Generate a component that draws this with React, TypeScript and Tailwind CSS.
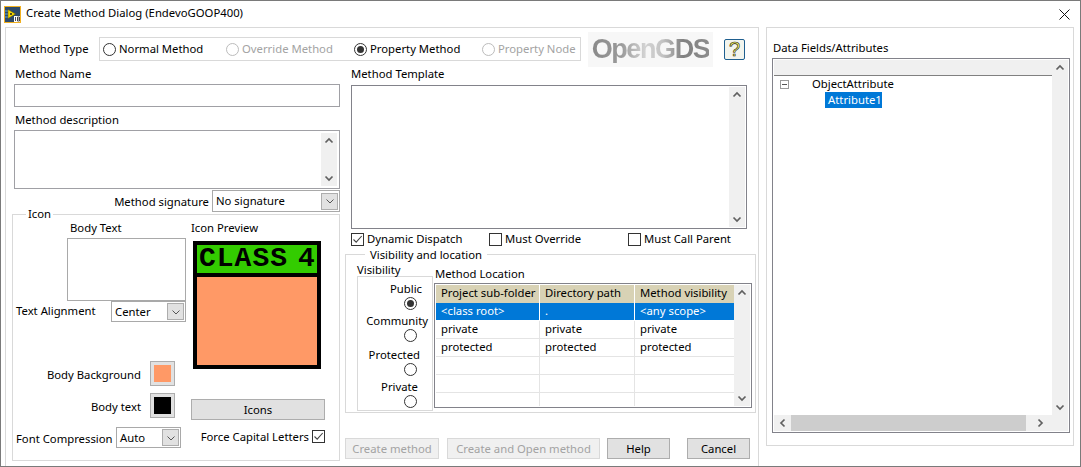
import React from "react";

const Radio = ({ checked = false, disabled = false }: { checked?: boolean; disabled?: boolean }) => (
  <span
    className={`flex h-[13px] w-[13px] shrink-0 items-center justify-center rounded-full border ${
      disabled ? "border-[#bcbcbc]" : "border-[#333]"
    }`}
  >
    {checked && <span className="h-[7px] w-[7px] rounded-full bg-[#333]" />}
  </span>
);

const Check = ({ checked = false }: { checked?: boolean }) => (
  <span className="flex h-[13px] w-[13px] shrink-0 items-center justify-center border border-[#333] bg-white">
    {checked && (
      <svg width="11" height="11" viewBox="0 0 11 11" fill="none" stroke="#444" strokeWidth="1.1">
        <path d="M1.5 5.5 4.2 8.2 9.7 2" />
      </svg>
    )}
  </span>
);

const Chevron = ({ dir }: { dir: "up" | "down" | "left" | "right" }) => {
  const paths = {
    up: "M1.5 6.5 5 3l3.5 3.5",
    down: "M1.5 3.5 5 7l3.5-3.5",
    left: "M6.5 1.5 3 5l3.5 3.5",
    right: "M3.5 1.5 7 5 3.5 8.5",
  };
  return (
    <svg width="10" height="10" viewBox="0 0 10 10" fill="none" stroke="#606060" strokeWidth="1.7">
      <path d={paths[dir]} />
    </svg>
  );
};

const VScroll = () => (
  <div className="flex h-full w-[16px] shrink-0 flex-col items-center justify-between bg-[#f0f0f0] py-[3px]">
    <Chevron dir="up" />
    <Chevron dir="down" />
  </div>
);

const Combo = ({ value, className }: { value: string; className: string }) => (
  <div className={`flex shrink-0 items-center justify-between border border-[#a9a9a9] bg-white pl-[3px] pr-[1px] ${className}`}>
    <span className="leading-none">{value}</span>
    <span className="flex h-[17px] w-[17px] items-center justify-center border border-[#adadad] bg-[#e1e1e1]">
      <svg width="10" height="10" viewBox="0 0 10 10" fill="none" stroke="#555" strokeWidth="1">
        <path d="M1.5 3.5 5 7l3.5-3.5" />
      </svg>
    </span>
  </div>
);

const Label = ({ children, className = "" }: { children: React.ReactNode; className?: string }) => (
  <div className={`h-[20px] leading-[20px] whitespace-nowrap ${className}`}>{children}</div>
);

const Swatch = ({ color }: { color: string }) => (
  <span className="flex h-[25px] w-[25px] items-center justify-center border border-[#adadad] bg-[#e1e1e1]">
    <span className={`h-[17px] w-[17px] ${color}`} />
  </span>
);

const PushButton = ({ label, className, disabled = false }: { label: string; className: string; disabled?: boolean }) => (
  <div
    className={`flex h-[21px] shrink-0 items-center justify-center border pt-[2px] ${
      disabled ? "border-[#d9d9d9] bg-[#f0f0f0] text-[#a3a3a3]" : "border-[#adadad] bg-[#e1e1e1]"
    } ${className}`}
  >
    {label}
  </div>
);

const rows = [
  ["<class root>", ".", "<any scope>"],
  ["private", "private", "private"],
  ["protected", "protected", "protected"],
  ["", "", ""],
  ["", "", ""],
  ["", "", ""],
];

const visibility = [
  { name: "Public", pad: "pr-[10px]", h: "h-[32px]", checked: true },
  { name: "Community", pad: "pr-[4px]", h: "h-[34px]", checked: false },
  { name: "Protected", pad: "pr-[12px]", h: "h-[32px]", checked: false },
  { name: "Private", pad: "pr-[14px]", h: "h-[30px]", checked: false },
];

const MethodTable = () => (
  <div className="flex h-[125px] w-[318px] border border-[#82828a] p-[1px]">
    <div className="w-[299px] overflow-hidden">
      <div className="grid h-[18px] grid-cols-[104px_95px_100px] bg-[#d8d2b5]">
        <span className="border-r border-white pl-[5px] leading-[15px] whitespace-nowrap">Project sub-folder</span>
        <span className="border-r border-white pl-[5px] leading-[15px]">Directory path</span>
        <span className="pl-[5px] leading-[15px]">Method visibility</span>
      </div>
      {rows.map((row, i) => (
        <div
          key={i}
          className={`grid h-[18px] grid-cols-[104px_95px_100px] border-b ${
            i === 0 ? "border-white bg-[#0078d7] text-white" : "border-[#e4e4e4]"
          }`}
        >
          {row.map((cell, j) => (
            <span
              key={j}
              className={`pl-[5px] leading-[15px] ${j < 2 ? `border-r ${i === 0 ? "border-white" : "border-[#e4e4e4]"}` : ""}`}
            >
              {cell}
            </span>
          ))}
        </div>
      ))}
    </div>
    <VScroll />
  </div>
);

const IconGroup = () => (
  <div className="relative mt-[2px] -ml-[2px] flex h-[247px] w-[328px] border border-[#d9d9d9]">
    <span className="absolute -top-[9px] left-[13px] bg-white px-[2px] leading-[15px]">Icon</span>
    <div className="w-[173px] pt-[3px]">
      <Label className="pl-[57px]">Body Text</Label>
      <div className="ml-[54px] h-[63px] w-[119px] border border-[#a9a9a9]" />
      <div className="flex h-[21px] items-center justify-between">
        <span className="pl-[3px]">Text Alignment</span>
        <Combo value="Center" className="h-[21px] w-[75px]" />
      </div>
      <div className="mt-[39px] flex items-center justify-end gap-[9px] pr-[11px]">
        <span className="pt-[4px]">Body Background</span>
        <Swatch color="bg-[#ff9966]" />
      </div>
      <div className="mt-[7px] flex items-center justify-end gap-[9px] pr-[11px]">
        <span className="pt-[4px]">Body text</span>
        <Swatch color="bg-black" />
      </div>
      <div className="mt-[9px] flex h-[21px] items-center justify-between pr-[5px]">
        <span className="pl-[3px] pt-[4px] whitespace-nowrap">Font Compression</span>
        <Combo value="Auto" className="h-[21px] w-[65px]" />
      </div>
    </div>
    <div className="ml-[5px] w-[134px] pt-[3px]">
      <Label>Icon Preview</Label>
      <div className="mt-[3px] ml-[2px] flex h-[128px] w-[128px] flex-col border-4 border-black bg-[#ff9966]">
        <div className="flex h-[32px] items-center border-b-4 border-black bg-[#33cc00] pl-[2px] font-['Liberation_Mono',monospace] text-[28px] font-bold leading-none tracking-[1px] text-black">
          <span>CLASS</span>
          <span className="ml-[10px]">4</span>
        </div>
      </div>
      <PushButton label="Icons" className="mt-[30px] w-[134px]" />
      <div className="mt-[10px] flex h-[13px] items-center justify-end gap-[3px]">
        <span className="pt-[2px] whitespace-nowrap">Force Capital Letters</span>
        <Check checked />
      </div>
    </div>
  </div>
);

const VisibilityGroup = () => (
  <div className="relative mt-[8px] -ml-[6px] flex h-[159px] w-[411px] border border-[#d9d9d9] pl-[11px]">
    <span className="absolute -top-[8px] left-[19px] bg-white px-[5px] leading-[15px]">Visibility and location</span>
    <div className="w-[77px] pt-[9px]">
      <div className="h-[12px] leading-[12px]">Visibility</div>
      <div className="flex h-[135px] w-[76px] flex-col items-end border border-[#d9d9d9] pt-[4px]">
        {visibility.map((v) => (
          <div key={v.name} className={`flex w-full flex-col items-end ${v.h}`}>
            <span className={`h-[16px] leading-[16px] ${v.pad}`}>{v.name}</span>
            <span className="pr-[15px]">
              <Radio checked={v.checked} />
            </span>
          </div>
        ))}
      </div>
    </div>
    <div className="pt-[9px]">
      <div className="ml-[1px] h-[19px] leading-[19px]">Method Location</div>
      <MethodTable />
    </div>
  </div>
);

export default function App() {
  return (
    <div className="flex h-[467px] w-[1081px] flex-col overflow-hidden border-x border-y border-[#7a7a7a] bg-white font-['Noto_Sans',sans-serif] text-[11.3px] text-black">
      <div className="flex h-[26px] shrink-0 items-center pl-[3px]">
        <svg width="17" height="17" viewBox="0 0 17 17">
          <rect x="0.5" y="0.5" width="16" height="16" fill="#2d4a6b" stroke="#f0b020" />
          <path d="M1 5h3M1 8h3M1 11h3" stroke="#5fa8e0" strokeWidth="1" />
          <path d="M4 3.5 11.5 8 4 12.5z" fill="#f5d800" stroke="#6b5a00" strokeWidth="0.5" />
          <circle cx="7" cy="8" r="1" fill="#222" />
          <rect x="10" y="10" width="6" height="6" fill="#fff" />
          <path d="M11.5 11v4M13.5 11h2v4h-2zM13.5 13h2" stroke="#222" strokeWidth="0.8" fill="none" />
        </svg>
        <span className="ml-[5px] pb-[2px] whitespace-nowrap">Create Method Dialog (EndevoGOOP400)</span>
        <svg className="ml-auto mr-[10px]" width="11" height="11" viewBox="0 0 11 11" stroke="#111" strokeWidth="1">
          <path d="M.5.5l10 10M10.5.5l-10 10" />
        </svg>
      </div>
      <div className="flex flex-1 pl-[4px]">
        <div className="w-[754px] border-x border-t border-[#d9d9d9] pl-[8px]">
          <div className="mt-[9px] flex h-[24px] items-center">
            <span className="ml-[5px] w-[80px] shrink-0">Method Type</span>
            <div className="flex h-[24px] w-[482px] shrink-0 items-center border border-[#d9d9d9] pl-[3px] whitespace-nowrap">
              <div className="flex w-[123px] items-center gap-[3px]">
                <Radio />
                <span>Normal Method</span>
              </div>
              <div className="flex w-[128px] items-center gap-[3px] text-[#a3a3a3]">
                <Radio disabled />
                <span>Override Method</span>
              </div>
              <div className="flex w-[128px] items-center gap-[3px]">
                <Radio checked />
                <span>Property Method</span>
              </div>
              <div className="flex items-center gap-[3px] text-[#a3a3a3]">
                <Radio disabled />
                <span>Property Node</span>
              </div>
            </div>
            <div className="ml-[7px] flex h-[35px] w-[125px] shrink-0 items-center justify-center bg-[#f7f7f7]">
              <span className="bg-[linear-gradient(90deg,#8a8a8a_0%,#9a9a9a_25%,#d2d2d2_45%,#c4c4c4_60%,#808080_78%,#8c8c8c_100%)] bg-clip-text font-['Liberation_Sans',sans-serif] text-[27px] font-bold leading-none tracking-[-1.4px] text-transparent">
                OpenGDS
              </span>
            </div>
            <div className="ml-[11px] flex h-[21px] w-[21px] shrink-0 items-center justify-center rounded-[2px] border border-[#1f5f8f] bg-[#f3f5ee] font-['Liberation_Sans',sans-serif] text-[20px] leading-none text-[#ffff66] [-webkit-text-stroke:0.6px_#111]">
              ?
            </div>
          </div>
          <div className="mt-[3px] flex gap-[11px]">
            <div className="w-[326px]">
              <Label className="pl-[1px]">Method Name</Label>
              <div className="h-[23px] border border-[#a0a0a5]" />
              <Label className="mt-[3px] pl-[1px]">Method description</Label>
              <div className="flex h-[59px] justify-end border border-[#a0a0a5] py-[2px] pr-[2px]">
                <VScroll />
              </div>
              <div className="mt-[1px] flex items-center justify-end gap-[3px]">
                <span className="pt-[2px]">Method signature</span>
                <Combo value="No signature" className="h-[22px] w-[128px]" />
              </div>
              <IconGroup />
            </div>
            <div className="w-[396px]">
              <Label>Method Template</Label>
              <div className="mt-[1px] flex h-[144px] justify-end border border-[#82828a] p-[1px]">
                <VScroll />
              </div>
              <div className="mt-[3px] flex h-[14px] items-center">
                <div className="flex w-[138px] items-center gap-[3px]">
                  <Check checked />
                  <span>Dynamic Dispatch</span>
                </div>
                <div className="flex w-[139px] items-center gap-[3px]">
                  <Check />
                  <span>Must Override</span>
                </div>
                <div className="flex items-center gap-[3px]">
                  <Check />
                  <span>Must Call Parent</span>
                </div>
              </div>
              <VisibilityGroup />
              <div className="mt-[25px] -ml-[6px] flex">
                <PushButton label="Create method" className="w-[94px]" disabled />
                <PushButton label="Create and Open method" className="ml-[8px] w-[153px]" disabled />
                <PushButton label="Help" className="ml-[7px] w-[63px]" />
                <PushButton label="Cancel" className="ml-[17px] w-[63px]" />
              </div>
            </div>
          </div>
        </div>
        <div className="ml-[7px] h-[419px] w-[308px] border border-[#d9d9d9] pl-[5px] pt-[10px]">
          <Label className="pl-[1px]">Data Fields/Attributes</Label>
          <div className="flex h-[375px] w-[298px] flex-col border border-[#82828a] p-[1px]">
            <div className="flex min-h-0 flex-1">
              <div className="flex-1">
                <div className="h-[16px] border-b border-[#808080] bg-[#f0f0f0]" />
                <div className="flex h-[16px] items-center pl-[6px]">
                  <span className="flex h-[9px] w-[9px] items-center justify-center border border-[#9a9a9a]">
                    <span className="h-[1px] w-[5px] bg-[#555]" />
                  </span>
                  <span className="ml-[23px]">ObjectAttribute</span>
                </div>
                <div className="ml-[51px] w-[57px] bg-[#0078d7] pl-[3px] leading-[16px] whitespace-nowrap text-white">Attribute1</div>
              </div>
              <VScroll />
            </div>
            <div className="flex h-[16px] shrink-0 items-center bg-[#f0f0f0]">
              <span className="flex w-[17px] justify-center">
                <Chevron dir="left" />
              </span>
              <div className="h-full w-[235px] bg-[#cdcdcd]" />
              <span className="flex w-[28px] justify-center">
                <Chevron dir="right" />
              </span>
            </div>
          </div>
        </div>
      </div>
    </div>
  );
}
